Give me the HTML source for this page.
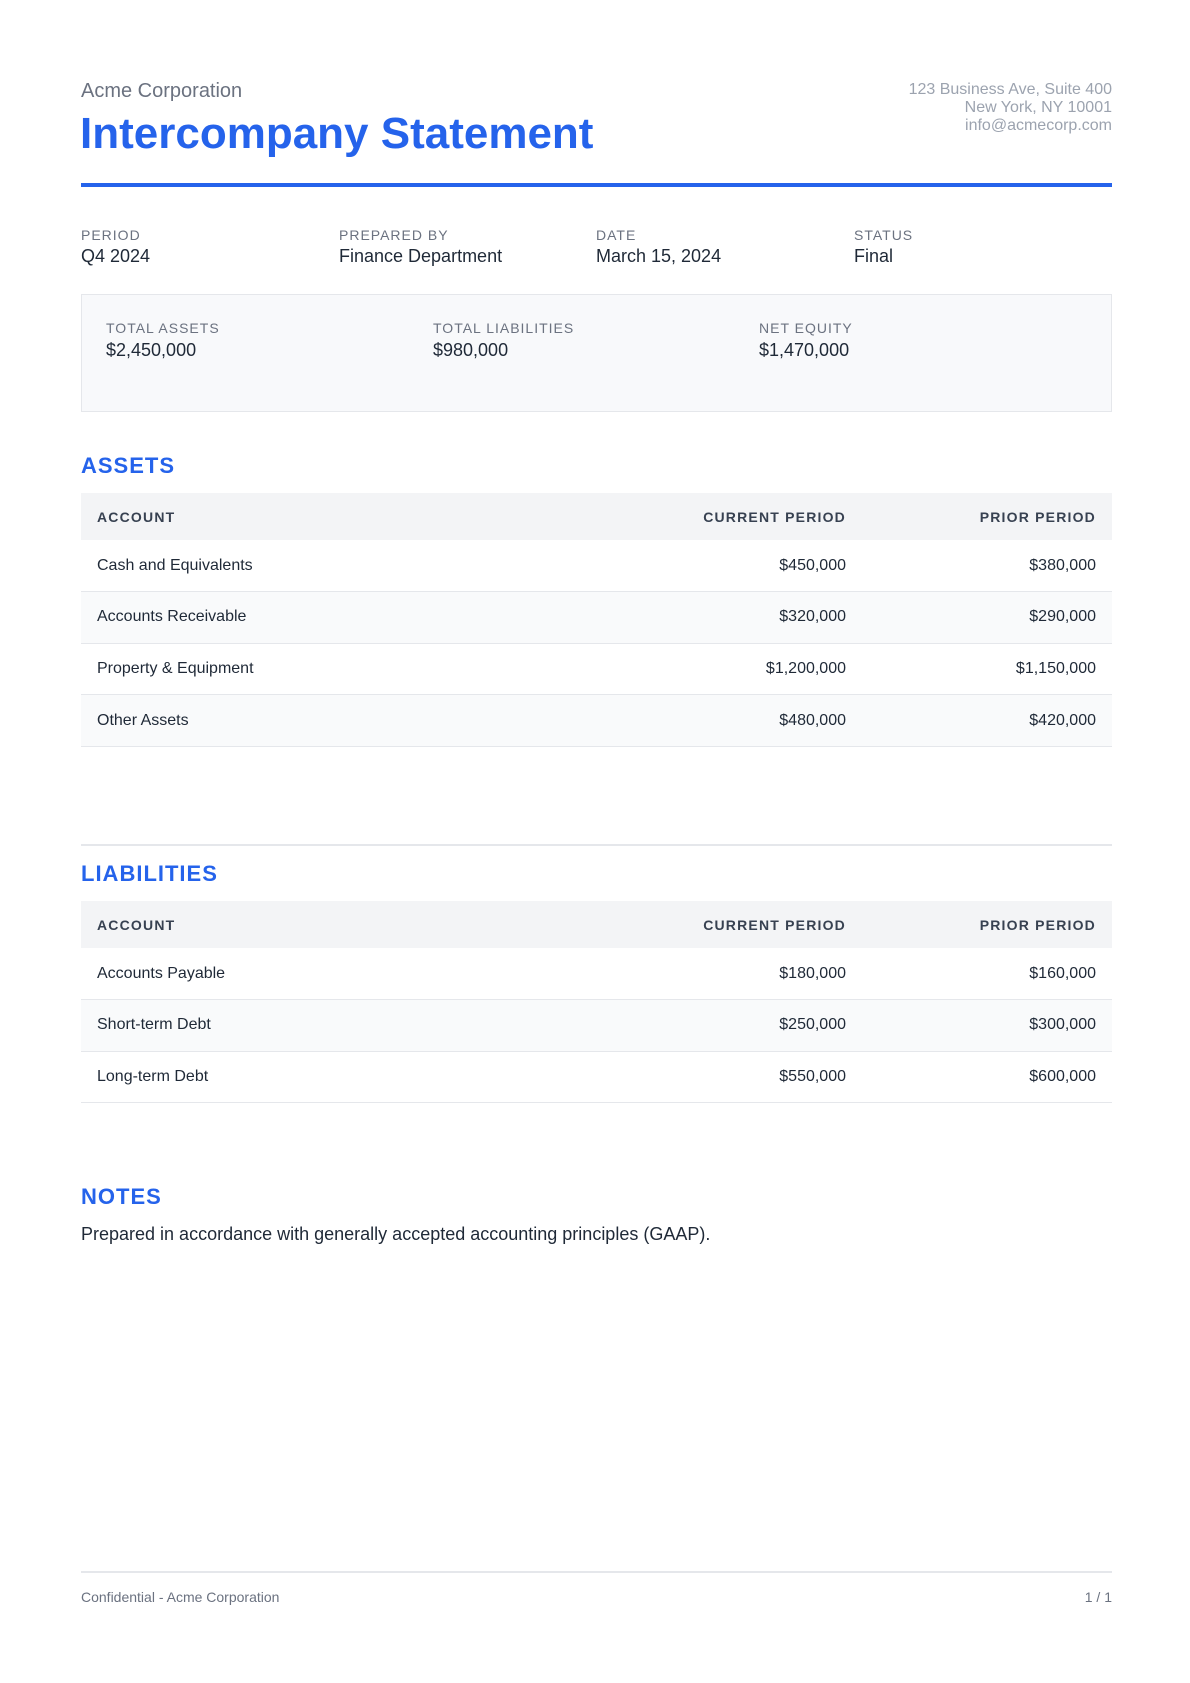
<!DOCTYPE html>
<html><head><style>
*{margin:0;padding:0;box-sizing:border-box}
body{width:1190px;height:1683px;background:#fff;font-family:"Liberation Sans",sans-serif;color:#1f2937;position:relative}
.a{position:absolute}
.lbl{font-size:14px;letter-spacing:1px;color:#6b7280;text-transform:uppercase}
.val{font-size:18px;color:#1f2937}
h2{position:absolute;left:81px;font-size:22px;font-weight:bold;color:#2563eb;letter-spacing:1px}
table{position:absolute;left:81px;width:1031px;border-collapse:collapse;font-size:16px}
th{background:#f3f4f6;height:47px;font-size:14px;font-weight:bold;letter-spacing:1.2px;color:#374151;text-align:left;padding:0 16px}
td{height:51.6px;padding:0 16px;border-bottom:1px solid #e5e7eb;color:#1f2937}
tr:nth-child(odd) td{background:#f9fafb}
.r{text-align:right}
</style></head><body>
<div class="a" style="left:81px;top:80px;font-size:20px;color:#6b7280">Acme Corporation</div>
<div class="a" style="left:80px;top:109px;font-size:44px;font-weight:bold;color:#2563eb">Intercompany Statement</div>
<div class="a" style="left:700px;width:412px;top:81px;font-size:16px;line-height:18px;color:#9ca3af;text-align:right">123 Business Ave, Suite 400<br>New York, NY 10001<br>info@acmecorp.com</div>
<div class="a" style="left:81px;top:183px;width:1031px;height:4px;background:#2563eb"></div>

<div class="a lbl" style="left:81px;top:227px">Period</div><div class="a val" style="left:81px;top:246px">Q4 2024</div>
<div class="a lbl" style="left:339px;top:227px">Prepared By</div><div class="a val" style="left:339px;top:246px">Finance Department</div>
<div class="a lbl" style="left:596px;top:227px">Date</div><div class="a val" style="left:596px;top:246px">March 15, 2024</div>
<div class="a lbl" style="left:854px;top:227px">Status</div><div class="a val" style="left:854px;top:246px">Final</div>

<div class="a" style="left:81px;top:294px;width:1031px;height:118px;background:#f8f9fb;border:1px solid #e5e7eb"></div>
<div class="a lbl" style="left:106px;top:320px">Total Assets</div><div class="a val" style="left:106px;top:340px">$2,450,000</div>
<div class="a lbl" style="left:433px;top:320px">Total Liabilities</div><div class="a val" style="left:433px;top:340px">$980,000</div>
<div class="a lbl" style="left:759px;top:320px">Net Equity</div><div class="a val" style="left:759px;top:340px">$1,470,000</div>

<h2 style="top:453px">ASSETS</h2>
<table style="top:493px"><tr><th>ACCOUNT</th><th class="r">CURRENT PERIOD</th><th class="r" style="width:250px">PRIOR PERIOD</th></tr>
<tr><td style="background:#fff">Cash and Equivalents</td><td class="r" style="background:#fff">$450,000</td><td class="r" style="background:#fff">$380,000</td></tr>
<tr><td>Accounts Receivable</td><td class="r">$320,000</td><td class="r">$290,000</td></tr>
<tr><td style="background:#fff">Property &amp; Equipment</td><td class="r" style="background:#fff">$1,200,000</td><td class="r" style="background:#fff">$1,150,000</td></tr>
<tr><td>Other Assets</td><td class="r">$480,000</td><td class="r">$420,000</td></tr></table>

<div class="a" style="left:81px;top:844px;width:1031px;height:2px;background:#e5e7eb"></div>
<h2 style="top:861px">LIABILITIES</h2>
<table style="top:901px"><tr><th>ACCOUNT</th><th class="r">CURRENT PERIOD</th><th class="r" style="width:250px">PRIOR PERIOD</th></tr>
<tr><td style="background:#fff">Accounts Payable</td><td class="r" style="background:#fff">$180,000</td><td class="r" style="background:#fff">$160,000</td></tr>
<tr><td>Short-term Debt</td><td class="r">$250,000</td><td class="r">$300,000</td></tr>
<tr><td style="background:#fff">Long-term Debt</td><td class="r" style="background:#fff">$550,000</td><td class="r" style="background:#fff">$600,000</td></tr></table>

<h2 style="top:1184px">NOTES</h2>
<div class="a" style="left:81px;top:1224px;font-size:18px">Prepared in accordance with generally accepted accounting principles (GAAP).</div>

<div class="a" style="left:81px;top:1571px;width:1031px;height:2px;background:#e5e7eb"></div>
<div class="a" style="left:81px;top:1589px;font-size:14px;color:#6b7280">Confidential - Acme Corporation</div>
<div class="a" style="left:900px;width:212px;text-align:right;top:1589px;font-size:14px;color:#6b7280">1 / 1</div>
</body></html>
